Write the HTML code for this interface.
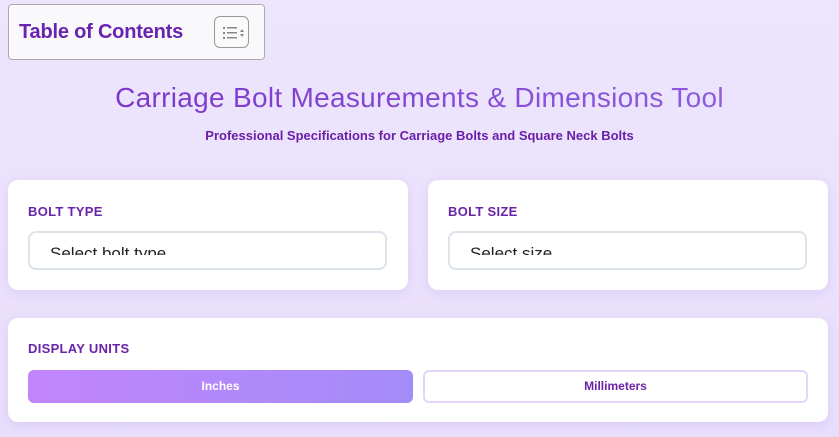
<!DOCTYPE html>
<html><head><style>
*{box-sizing:border-box;margin:0;padding:0}
body{width:839px;height:437px;overflow:hidden;background:linear-gradient(180deg,#ede5fd 0%,#e8defc 100%);font-family:"Liberation Sans",sans-serif;position:relative}
.toc{position:absolute;left:8px;top:4px;width:257px;height:56px;background:#f9f9fb;border:1px solid #aaa;border-radius:4px}
.toc span{position:absolute;left:10px;top:16px;font-size:20px;font-weight:bold;color:#6a22b0;letter-spacing:-0.2px}
.tocbtn{position:absolute;left:205px;top:11px;width:35px;height:32px;border:1px solid #999;border-radius:6px;background:#fafafa}
h1{position:absolute;left:0;width:839px;top:82px;text-align:center;font-size:28px;font-weight:normal;letter-spacing:0.3px;background:linear-gradient(90deg,#7a2fc4,#8f63e6);-webkit-background-clip:text;color:transparent}
.sub{position:absolute;left:0;width:839px;top:128px;text-align:center;font-size:13px;font-weight:bold;color:#6a1fa8}
.card{position:absolute;background:#fff;border-radius:10px;box-shadow:0 3px 10px rgba(140,100,210,.15)}
.lab{position:absolute;left:20px;top:24px;font-size:13px;font-weight:bold;color:#6a22a8;letter-spacing:.3px}
.sel{position:absolute;left:20px;top:51px;width:359px;height:39px;border:2px solid #dde3ea;border-radius:8px;overflow:hidden}
.clip{position:absolute;left:20px;top:12px;width:300px;height:10px;overflow:hidden}
.clip span{position:absolute;left:0;top:0;font-size:17px;line-height:17px;color:#222;white-space:nowrap}
.btn{position:absolute;top:52px;height:33px;border-radius:6px;font-size:12px;font-weight:bold;text-align:center;line-height:33px}
</style></head><body>
<div class="toc"><span>Table of Contents</span>
<div class="tocbtn"><svg width="35" height="32" viewBox="0 0 35 32"><g fill="#888"><rect x="8" y="10" width="2" height="2"/><rect x="8" y="15" width="2" height="2"/><rect x="8" y="20" width="2" height="2"/><rect x="12" y="10" width="10" height="1.5"/><rect x="12" y="15" width="10" height="1.5"/><rect x="12" y="20" width="10" height="1.5"/><path d="M25 15l2-3 2 3z"/><path d="M25 17l2 3 2-3z"/></g></svg></div></div>
<h1>Carriage Bolt Measurements &amp; Dimensions Tool</h1>
<div class="sub">Professional Specifications for Carriage Bolts and Square Neck Bolts</div>
<div class="card" style="left:8px;top:180px;width:400px;height:110px"><div class="lab">BOLT TYPE</div><div class="sel"><div class="clip"><span>Select bolt type</span></div></div></div>
<div class="card" style="left:428px;top:180px;width:400px;height:110px"><div class="lab">BOLT SIZE</div><div class="sel"><div class="clip"><span>Select size</span></div></div></div>
<div class="card" style="left:8px;top:318px;width:820px;height:104px"><div class="lab" style="top:23px">DISPLAY UNITS</div>
<div class="btn" style="left:20px;width:385px;background:linear-gradient(90deg,#c185fb,#a48cf8);color:#fff">Inches</div>
<div class="btn" style="left:415px;width:385px;border:2px solid #e6d5fb;color:#6a22a8;line-height:29px">Millimeters</div></div>
</body></html>
